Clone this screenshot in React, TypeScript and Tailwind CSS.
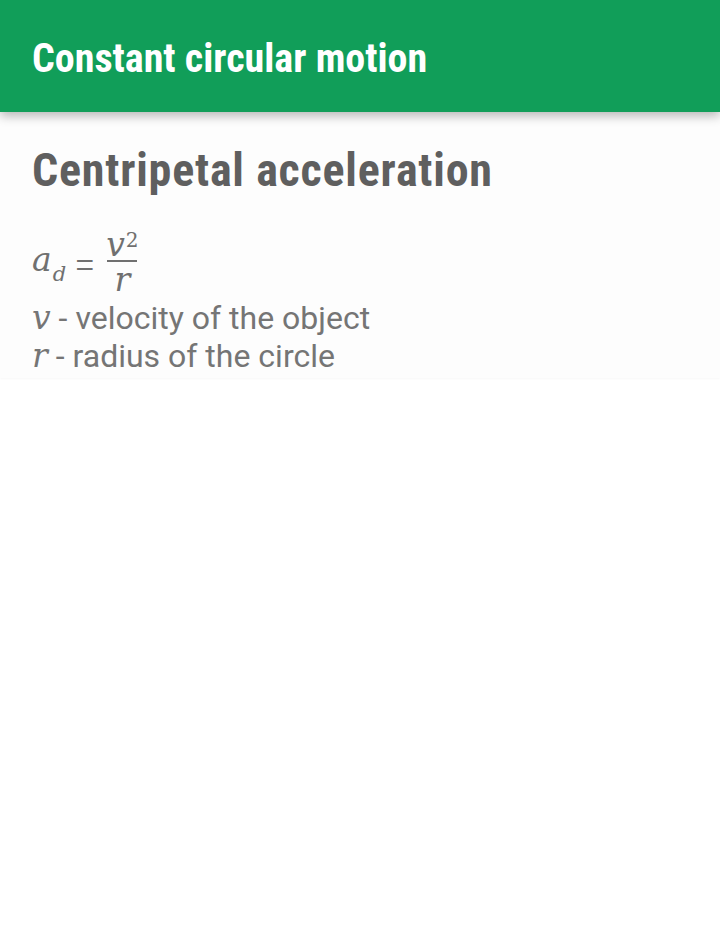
import React from 'react';

const serif = "font-['DejaVu_Serif',serif] italic";

const App: React.FC = () => {
  return (
    <div className="min-h-[950px] bg-white font-['Roboto',sans-serif]">
      <header className="relative z-10 flex h-[112px] items-center bg-[#119e59] px-8 shadow-[0_4px_10px_rgba(0,0,0,0.28)]">
        <h1 className="pt-[6px] text-[40px] font-bold leading-none text-white [font-stretch:condensed]">
          Constant circular motion
        </h1>
      </header>

      <section className="bg-[#fdfdfd] px-8 pb-[3px] pt-[32px] shadow-[0_1px_2px_rgba(0,0,0,0.03)]">
        <h2 className="text-[46px] font-bold leading-[52px] tracking-[0.8px] text-[#5f5f5f] [font-stretch:condensed]">
          Centripetal acceleration
        </h2>

        <div className="mt-[34px] flex items-start text-[#707070]">
          <span className={`${serif} mt-[12px] text-[33px] leading-[36px]`}>a</span>
          <span className={`${serif} ml-[1px] mt-[32px] text-[21px] leading-[24px]`}>d</span>
          <span className="ml-[8px] mt-[15px] text-[38px] font-light leading-[40px]">=</span>
          <span className="ml-[11px] flex flex-col items-center">
            <span className={`${serif} text-[33px] leading-[30px]`}>
              v<sup className="relative -top-[9px] ml-[1px] text-[20px] not-italic">2</sup>
            </span>
            <span className="h-[2px] w-[30px] bg-[#707070]" />
            <span className={`${serif} text-[33px] leading-[36px]`}>r</span>
          </span>
        </div>

        <p className="mt-[1px] text-[32px] leading-[38px] text-[#757575]">
          <span className={`${serif} text-[33px]`}>v</span> - velocity of the object
        </p>
        <p className="text-[32px] leading-[38px] text-[#757575]">
          <span className={`${serif} text-[33px]`}>r</span> - radius of the circle
        </p>
      </section>
    </div>
  );
};

export default App;
